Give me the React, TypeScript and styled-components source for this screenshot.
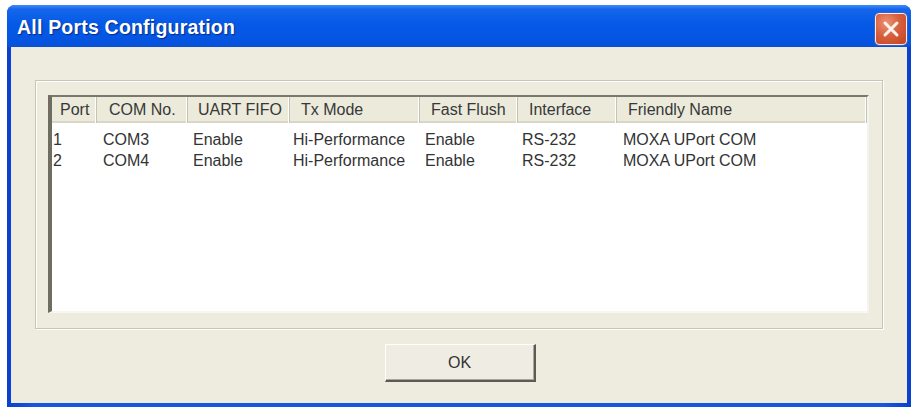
import * as React from 'react';
import styled, { createGlobalStyle } from 'styled-components';

interface PortRow {
  port: string;
  com: string;
  fifo: string;
  txMode: string;
  flush: string;
  iface: string;
  name: string;
}

const columns = [
  { title: 'Port', width: 45, head: 8, cell: 1 },
  { title: 'COM No.', width: 91, head: 12, cell: 6 },
  { title: 'UART FIFO', width: 102, head: 10, cell: 5 },
  { title: 'Tx Mode', width: 130, head: 11, cell: 3 },
  { title: 'Fast Flush', width: 98, head: 11, cell: 5 },
  { title: 'Interface', width: 99, head: 11, cell: 4 },
  { title: 'Friendly Name', width: 250, head: 11, cell: 6 },
];

const rows: PortRow[] = [
  { port: '1', com: 'COM3', fifo: 'Enable', txMode: 'Hi-Performance', flush: 'Enable', iface: 'RS-232', name: 'MOXA UPort COM' },
  { port: '2', com: 'COM4', fifo: 'Enable', txMode: 'Hi-Performance', flush: 'Enable', iface: 'RS-232', name: 'MOXA UPort COM' },
];

const gridCols = columns.map((c) => `${c.width}px`).join(' ');

const GlobalStyle = createGlobalStyle`
  html, body {
    margin: 0;
    padding: 0;
    background: #ffffff;
    font-family: "Liberation Sans", Arial, sans-serif;
  }
`;

const Page = styled.div`
  padding: 5px 7px 0 7px;
  height: 407px;
  box-sizing: border-box;
  overflow: hidden;
`;

const Frame = styled.div`
  width: 904px;
  height: 404px;
  display: flex;
  flex-direction: column;
  border-radius: 8px 8px 0 0;
  background: linear-gradient(to right, #0a3fd0, #1656e0 3%, #1656e0 97%, #0a3fd0);
  overflow: hidden;
`;

const TitleBar = styled.div`
  height: 42px;
  flex: none;
  display: flex;
  align-items: flex-start;
  justify-content: space-between;
  padding: 0 4px 0 10px;
  background: linear-gradient(
    to bottom,
    #3d8ef7 0%,
    #1566ec 10%,
    #0459e6 45%,
    #0555e2 85%,
    #0b4fd6 100%
  );
`;

const Title = styled.div`
  color: #ffffff;
  font-family: "Liberation Sans", Arial, sans-serif;
  font-weight: bold;
  font-size: 19.5px;
  line-height: 44px;
  text-shadow: 1px 1px 1px #0a2a8a;
  letter-spacing: 0.2px;
`;

const CloseButton = styled.div`
  margin-top: 8px;
  width: 30px;
  height: 30px;
  border: 1px solid #f4efe8;
  border-radius: 4px;
  background: radial-gradient(circle at 35% 30%, #ea9375 0%, #d8603f 45%, #c2431f 100%);
  display: flex;
  align-items: center;
  justify-content: center;
  box-shadow: 0 0 0 1px #3a5fc8;
`;

const Body = styled.div`
  flex: 1;
  margin: 0 4px 6px 4px;
  background: #eeebdf;
  display: flex;
  flex-direction: column;
  align-items: center;
  padding-top: 33px;
`;

const GroupBox = styled.div`
  width: 848px;
  height: 249px;
  box-sizing: border-box;
  border: 1px solid #c8c5b6;
  box-shadow: inset 1px 1px 0 #ffffff, 1px 1px 0 #ffffff;
  padding: 14px 13px 15px 12px;
  display: flex;
`;

const ListView = styled.div`
  flex: 1;
  background: #ffffff;
  border-top: 2px solid #7a786c;
  border-left: 4px solid #6f6d62;
  border-right: 2px solid #f4f3ee;
  border-bottom: 2px solid #f7f6f1;
  overflow: hidden;
`;

const HeaderRow = styled.div`
  display: grid;
  grid-template-columns: ${gridCols};
  height: 24px;
  background: #ebeadb;
  border-bottom: 2px solid #d9d6c6;
`;

const HeaderCell = styled.div<{ $pad: number }>`
  padding-left: ${(p) => p.$pad}px;
  font-size: 16px;
  line-height: 26px;
  color: #383838;
  white-space: nowrap;
  border-right: 1px solid #c4c2b0;
  box-shadow: inset -1px 0 0 #ffffff;
  box-sizing: border-box;
`;

const Rows = styled.div`
  padding-top: 6px;
`;

const DataRow = styled.div`
  display: grid;
  grid-template-columns: ${gridCols};
  height: 21px;
`;

const Cell = styled.div<{ $pad: number }>`
  padding-left: ${(p) => p.$pad}px;
  font-size: 16px;
  line-height: 21px;
  color: #333333;
  white-space: nowrap;
`;

const OkButton = styled.button`
  margin-top: 15px;
  margin-left: 2px;
  width: 151px;
  height: 38px;
  background: #efede3;
  border-top: 1px solid #ffffff;
  border-left: 1px solid #ffffff;
  border-right: 2px solid #5c5b55;
  border-bottom: 2px solid #5c5b55;
  box-shadow: inset -1px -1px 0 #a9a79c;
  font-family: "Liberation Sans", Arial, sans-serif;
  font-size: 16px;
  color: #333333;
  padding: 0;
`;

const CloseIcon = () => (
  <svg width="20" height="20" viewBox="0 0 20 20">
    <path d="M4 4 L16 16 M16 4 L4 16" stroke="#fdf4ee" strokeWidth="3" strokeLinecap="round" />
  </svg>
);

const App: React.FC = () => (
  <>
    <GlobalStyle />
    <Page>
      <Frame>
        <TitleBar>
          <Title>All Ports Configuration</Title>
          <CloseButton>
            <CloseIcon />
          </CloseButton>
        </TitleBar>
        <Body>
          <GroupBox>
            <ListView>
              <HeaderRow>
                {columns.map((c) => (
                  <HeaderCell key={c.title} $pad={c.head}>
                    {c.title}
                  </HeaderCell>
                ))}
              </HeaderRow>
              <Rows>
                {rows.map((r) => {
                  const values = [r.port, r.com, r.fifo, r.txMode, r.flush, r.iface, r.name];
                  return (
                    <DataRow key={r.port}>
                      {values.map((v, i) => (
                        <Cell key={i} $pad={columns[i].cell}>
                          {v}
                        </Cell>
                      ))}
                    </DataRow>
                  );
                })}
              </Rows>
            </ListView>
          </GroupBox>
          <OkButton>OK</OkButton>
        </Body>
      </Frame>
    </Page>
  </>
);

export default App;
